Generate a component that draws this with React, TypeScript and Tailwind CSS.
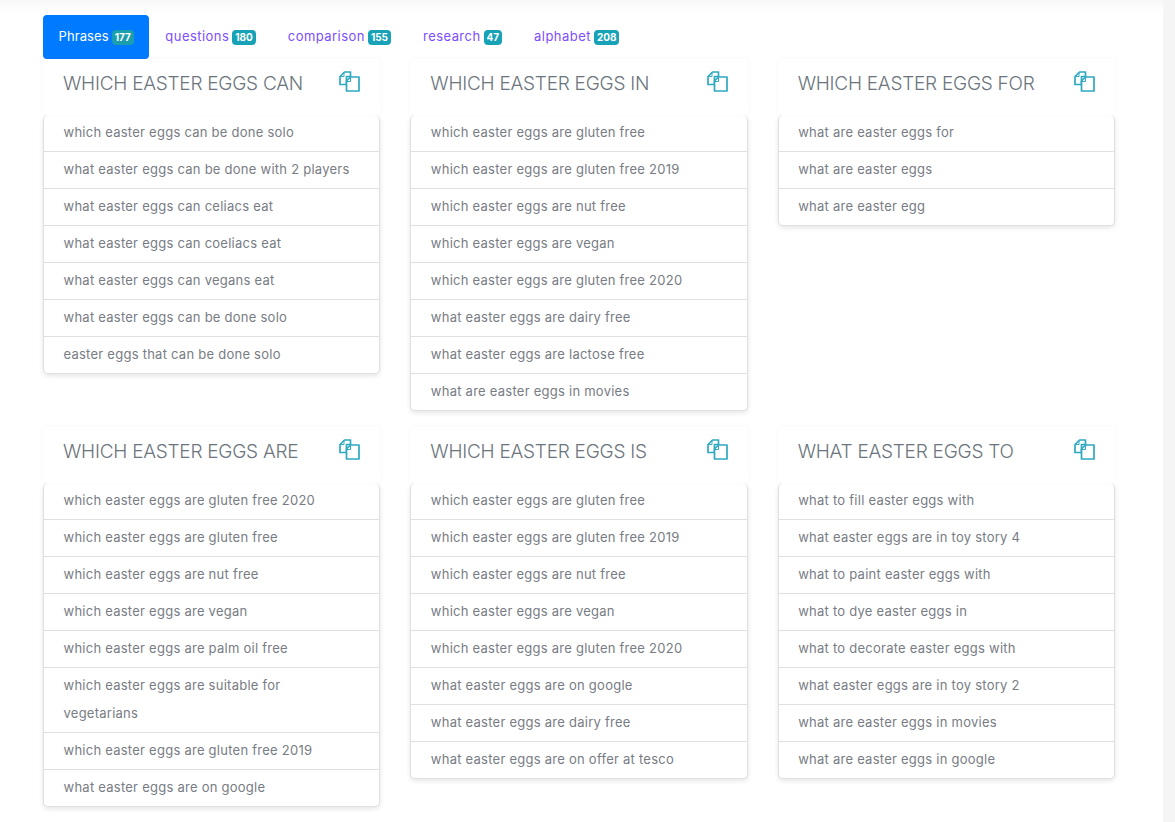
const tabs = [
  { label: "Phrases", count: 177, active: true },
  { label: "questions", count: 180 },
  { label: "comparison", count: 155 },
  { label: "research", count: 47 },
  { label: "alphabet", count: 208 },
];

const cards: { title: string; items: string[] }[] = [
  { title: "WHICH EASTER EGGS CAN", items: ["which easter eggs can be done solo", "what easter eggs can be done with 2 players", "what easter eggs can celiacs eat", "what easter eggs can coeliacs eat", "what easter eggs can vegans eat", "what easter eggs can be done solo", "easter eggs that can be done solo"] },
  { title: "WHICH EASTER EGGS IN", items: ["which easter eggs are gluten free", "which easter eggs are gluten free 2019", "which easter eggs are nut free", "which easter eggs are vegan", "which easter eggs are gluten free 2020", "what easter eggs are dairy free", "what easter eggs are lactose free", "what are easter eggs in movies"] },
  { title: "WHICH EASTER EGGS FOR", items: ["what are easter eggs for", "what are easter eggs", "what are easter egg"] },
  { title: "WHICH EASTER EGGS ARE", items: ["which easter eggs are gluten free 2020", "which easter eggs are gluten free", "which easter eggs are nut free", "which easter eggs are vegan", "which easter eggs are palm oil free", "which easter eggs are suitable for\nvegetarians", "which easter eggs are gluten free 2019", "what easter eggs are on google"] },
  { title: "WHICH EASTER EGGS IS", items: ["which easter eggs are gluten free", "which easter eggs are gluten free 2019", "which easter eggs are nut free", "which easter eggs are vegan", "which easter eggs are gluten free 2020", "what easter eggs are on google", "what easter eggs are dairy free", "what easter eggs are on offer at tesco"] },
  { title: "WHAT EASTER EGGS TO", items: ["what to fill easter eggs with", "what easter eggs are in toy story 4", "what to paint easter eggs with", "what to dye easter eggs in", "what to decorate easter eggs with", "what easter eggs are in toy story 2", "what are easter eggs in movies", "what are easter eggs in google"] },
];

function CopyIcon() {
  return (
    <svg width="21" height="21" viewBox="0 0 21 21" fill="none" stroke="#2fa9c0" strokeWidth="1.7" strokeLinejoin="round" className="shrink-0">
      <path d="M5.5 1h6v4.5H7.5V13.5H1V5.5z" />
      <path d="M5 1.5v4H1.5" strokeWidth="1" />
      <path d="M11.5 6h8.5v14H7.5V10z" fill="#fff" />
      <path d="M11.5 6.5v4H7.5" strokeWidth="1" />
    </svg>
  );
}

function Card({ title, items }: { title: string; items: string[] }) {
  return (
    <div className="self-start">
      <div className="relative z-10 flex h-[56px] items-start justify-between rounded-t-[5px] bg-white pl-5 pr-[20px] pt-3 shadow-[0_-1px_6px_rgba(0,0,0,0.03)]">
        <h3 className="text-[19px] leading-[26px] font-light tracking-[-0.25px] text-[#6c757d]">{title}</h3>
        <CopyIcon />
      </div>
      <ul className="relative rounded-[5px] border border-t-0 border-[#dee0e3] bg-white shadow-[0_2px_5px_rgba(0,0,0,0.1)]">
        {items.map((t, i) => (
          <li key={i} className="whitespace-pre-line border-b border-[#dee0e3] pl-[19.5px] pr-5 pt-[3px] pb-[5px] text-[13px] leading-[28px] tracking-[0.25px] text-[#787c84] last:border-b-0">
            {t}
          </li>
        ))}
      </ul>
    </div>
  );
}

export default function App() {
  return (
    <div className="flex min-h-[822px] bg-[#f5f5f5] font-['Inter','Liberation_Sans',sans-serif]">
      <div className="w-[1163px] shrink-0 bg-white">
        <div className="h-3 bg-gradient-to-b from-[#f7f7f7] to-white" />
        <div className="pl-[43px] pr-[48px] pt-[3px]">
          <nav className="flex items-center">
            {tabs.map((t) => (
              <a
                key={t.label}
                className={
                  t.active
                    ? "flex h-[44px] items-center gap-[3px] rounded-[4px] bg-[#007bff] px-[15.5px] text-[13px] tracking-[0.1px] text-white"
                    : "flex h-[44px] items-center gap-[3px] px-[16px] text-[13px] tracking-[0.45px] text-[#7c4dff]"
                }
              >
                {t.label}
                <span className={`rounded-[4px] px-[3px] text-[10px] leading-[15px] font-bold tracking-normal text-white ${t.active ? "bg-[#1b9eae]" : "bg-[#17a2b8]"}`}>
                  {t.count}
                </span>
              </a>
            ))}
          </nav>
          <div className="grid grid-cols-3 gap-x-[30px] gap-y-[16px]">
            {cards.map((c) => (
              <Card key={c.title} {...c} />
            ))}
          </div>
        </div>
      </div>
    </div>
  );
}
